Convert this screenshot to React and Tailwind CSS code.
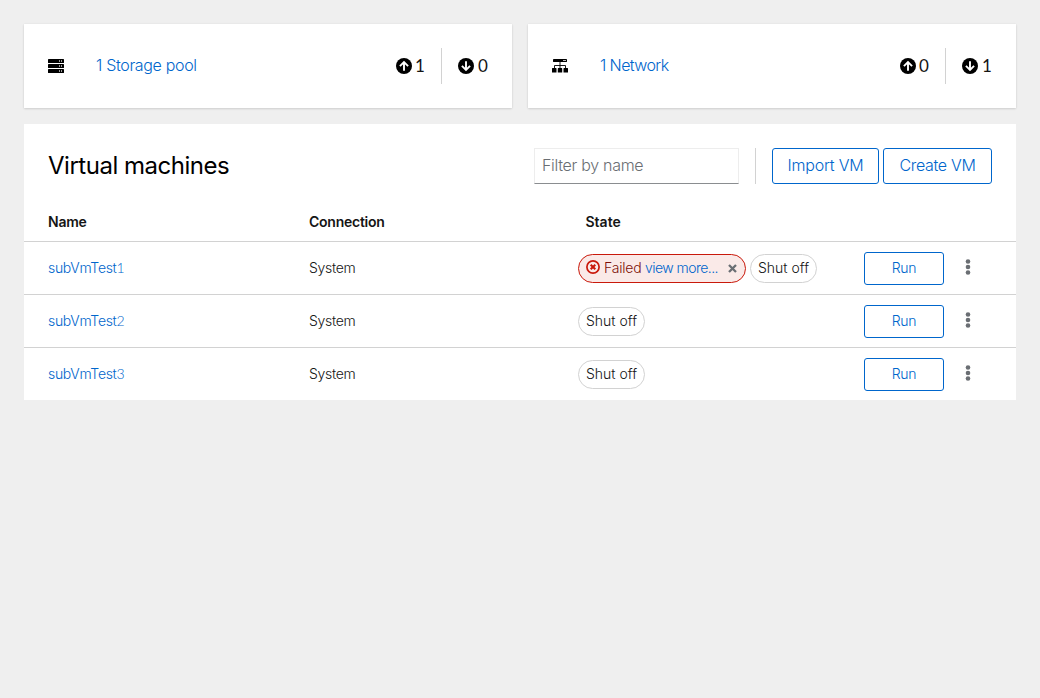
import React from 'react';

function ServerIcon() {
  return (
    <svg className="h-4 w-4" viewBox="0 0 16 16">
      {[1, 6, 11].map((y) => (
        <g key={y}>
          <rect x="0" y={y} width="16" height="4" rx="0.6" fill="#000" />
          <path d={`M11 ${y + 1}h1v2h-1zM13 ${y + 1}h1v2h-1z`} fill="#999" />
        </g>
      ))}
    </svg>
  );
}

function NetworkIcon() {
  return (
    <svg className="h-4 w-4" viewBox="0 0 16 16">
      <rect x="1" y="1" width="14" height="3" rx="0.4" fill="#000" />
      <path d="M11 2h3v1h-3z" fill="#bbb" />
      <path d="M8 4v6.5M2.500 10.500v-3h11v3" fill="none" stroke="#000" strokeWidth="0.9" />
      <path d="M0 10.500q0-.5.5-.5h3.500q.5 0 .5.5v4h-4.500zM5.800 10.500q0-.5.5-.5h3.400q.5 0 .5.5v4h-4.400zM11.500 10.500q0-.5.5-.5h3.500q.5 0 .5.5v4h-4.500z" fill="#000" />
    </svg>
  );
}

function ArrowCircle({ down }) {
  return (
    <svg className={down ? 'h-4 w-4 rotate-180' : 'h-4 w-4'} viewBox="0 0 16 16">
      <circle cx="8" cy="8" r="8" fill="#000" />
      <path d="M8 12.700V4.600M3.900 8.100L8 4.100l4.100 4" fill="none" stroke="#fff" strokeWidth="1.9" />
    </svg>
  );
}

function Count({ down, value }) {
  return (
    <span className={down ? 'flex items-center gap-1' : 'flex items-center gap-[3px]'}>
      <ArrowCircle down={down} />
      <span className="w-[10px] text-center font-['Lato',sans-serif] text-[17px] leading-6 text-[#151515]">{value}</span>
    </span>
  );
}

function SummaryCard({ icon, noun, up, down, tracking }) {
  return (
    <div className="flex h-[84px] flex-1 items-center bg-white pr-6 pl-6 shadow-[0_1px_2px_0_rgba(3,3,3,0.12),0_0_2px_0_rgba(3,3,3,0.06)]">
      {icon}
      <a className={`ml-8 flex-1 pb-0.5 text-base font-light text-[#0066cc] ${tracking}`}>1 {noun}</a>
      <Count value={up} />
      <span className="mx-4 h-9 w-px bg-[#d2d2d2]" />
      <Count down value={down} />
    </div>
  );
}

function ShutOff() {
  return (
    <span className="flex h-[29px] w-[67px] items-center justify-center rounded-full border border-[#d2d2d2] bg-white text-sm font-light text-[#151515]">
      Shut off
    </span>
  );
}

function FailedLabel() {
  return (
    <span className="flex h-[29px] w-[168px] items-center rounded-full border border-[#c9190b] bg-[#faeae8] pl-[7px] text-sm font-light">
      <svg className="mb-[3px] h-[14px] w-[14px]" viewBox="0 0 14 14" fill="none" stroke="#c9190b">
        <circle cx="7" cy="7" r="6.1" strokeWidth="1.7" />
        <path d="M4.700 4.700l4.600 4.600M9.300 4.700L4.700 9.300" strokeWidth="2" />
      </svg>
      <span className="ml-1 w-[37px] tracking-[-0.2px] text-[#7d1007]">Failed</span>
      <span className="ml-1 w-[74px] tracking-[-0.55px] whitespace-nowrap text-[#0066cc]">view more...</span>
      <svg className="ml-[9px] h-[9px] w-[9px]" viewBox="0 0 9 9">
        <path d="M1 1l7 7M8 1L1 8" stroke="#6a6e73" strokeWidth="2.300" />
      </svg>
    </span>
  );
}

function Row({ index, failed }) {
  return (
    <div className="flex h-[53px] items-center border-t border-[#d2d2d2] pl-6 text-sm font-light text-[#151515]">
      <a className="w-[261px] tracking-[-0.3px] text-[#0066cc]">
        subVmTest<span className="font-['Lato',sans-serif] text-[14px] font-light">{index}</span>
      </a>
      <span className="w-[269px] tracking-[-0.3px]">System</span>
      <span className="flex w-[286px] gap-1">
        {failed && <FailedLabel />}
        <ShutOff />
      </span>
      <button className="h-[33px] w-20 rounded-[3px] border border-[#0066cc] tracking-[-0.3px] text-[#0066cc]">Run</button>
      <svg className="mb-[2px] ml-[21px] h-4 w-[6px]" viewBox="0 0 6 16" fill="#6a6e73">
        <circle cx="3" cy="2.500" r="2.300" />
        <circle cx="3" cy="8" r="2.300" />
        <circle cx="3" cy="13.500" r="2.300" />
      </svg>
    </div>
  );
}

export default function App() {
  return (
    <div className="h-[698px] w-[1040px] bg-[#efefef] p-6 font-['Inter',sans-serif]">
      <div className="flex gap-4">
        <SummaryCard icon={<ServerIcon />} noun="Storage pool" up="1" down="0" tracking="tracking-[-0.33px]" />
        <SummaryCard icon={<NetworkIcon />} noun="Network" up="0" down="1" tracking="tracking-[-0.6px]" />
      </div>
      <div className="mt-4 h-[276px] bg-white pt-6">
        <div className="flex h-9 items-center px-6">
          <h1 className="flex-1 text-2xl tracking-[-0.48px] text-black">Virtual machines</h1>
          <input
            className="h-9 w-[205px] border border-[#ededed] border-b-[#8a8d90] px-[7px] pb-0.5 text-base font-light tracking-[-0.3px] placeholder:text-[#6a6e73]"
            placeholder="Filter by name"
          />
          <span className="mx-4 h-9 w-px bg-[#d2d2d2]" />
          <button className="h-9 w-[107px] rounded-[3px] border border-[#0066cc] pb-0.5 text-base font-light tracking-[-0.2px] text-[#0066cc]">Import VM</button>
          <button className="ml-1 h-9 w-[109px] rounded-[3px] border border-[#0066cc] pb-0.5 text-base font-light tracking-[-0.3px] text-[#0066cc]">Create VM</button>
        </div>
        <div className="flex h-[57px] items-center pt-[19px] pl-6 text-sm font-semibold tracking-[-0.25px] text-[#151515]">
          <span className="w-[261px]">Name</span>
          <span className="w-[276.500px]">Connection</span>
          <span className="tracking-normal">State</span>
        </div>
        <Row index="1" failed />
        <Row index="2" />
        <Row index="3" />
      </div>
    </div>
  );
}
